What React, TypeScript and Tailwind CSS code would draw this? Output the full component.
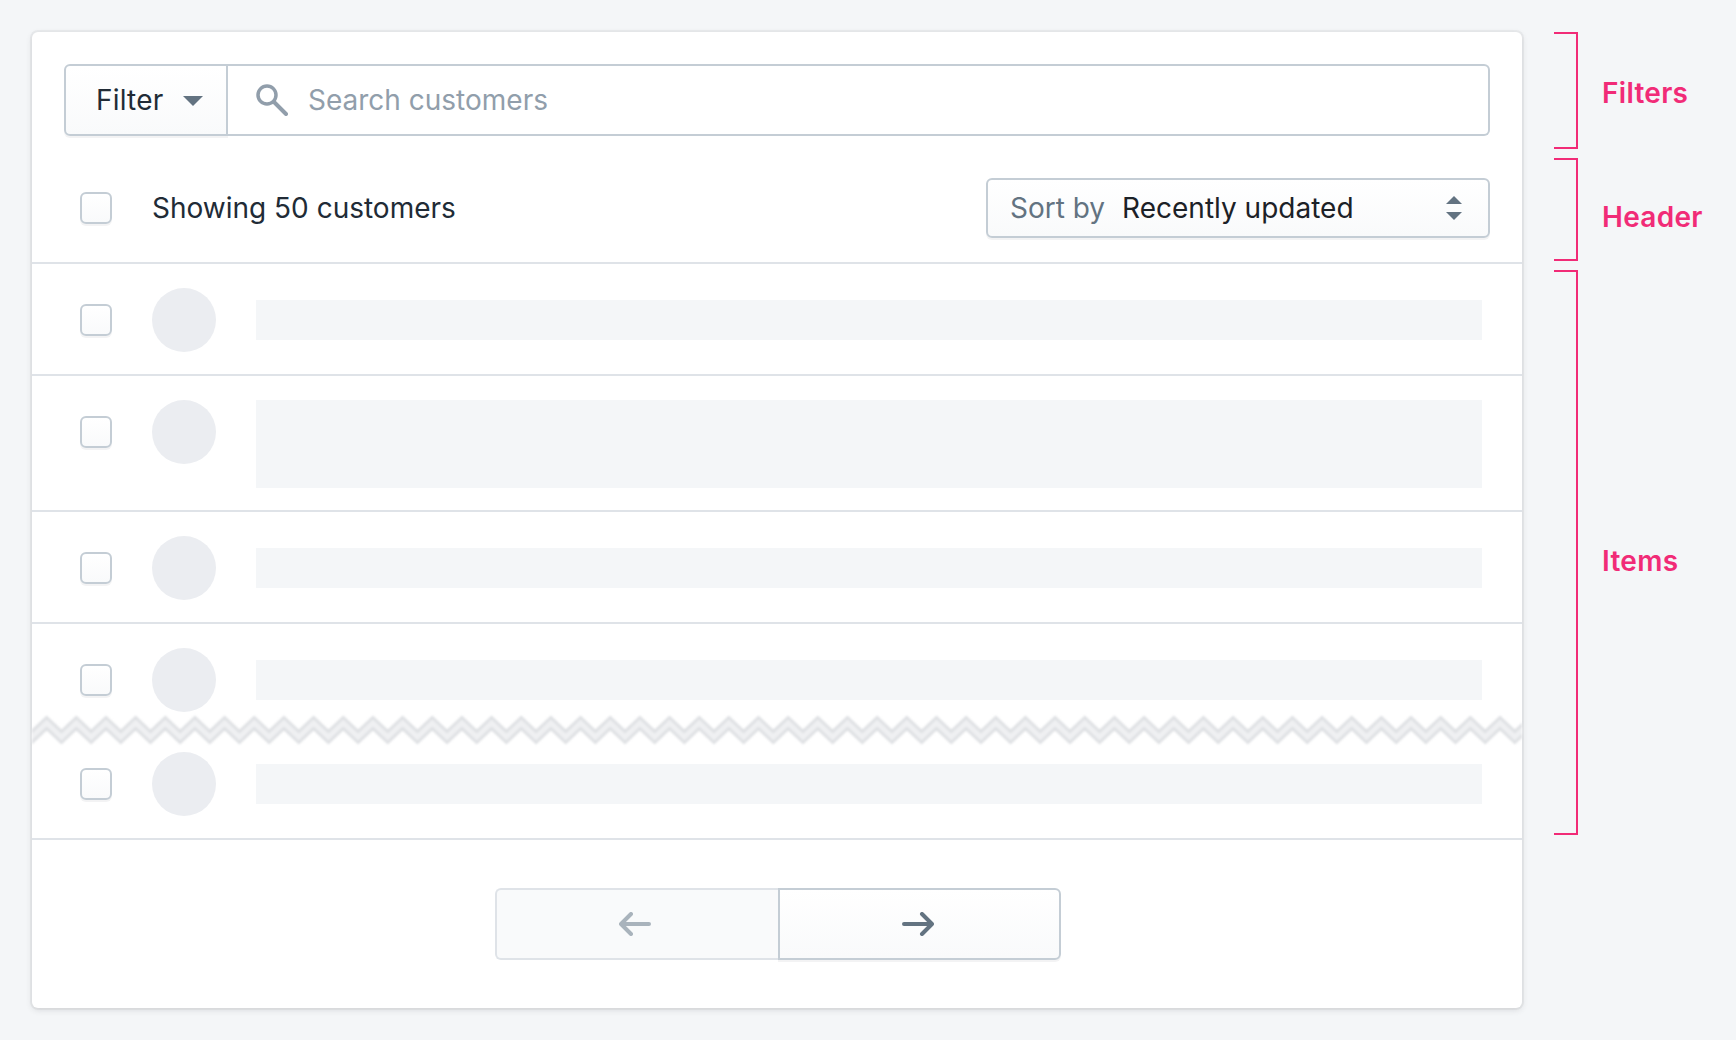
import React from 'react';

const ZIGZAG_POINTS = Array.from({ length: 104 }, (_, i) => `${-15 + i * 14.83},${i % 2 === 0 ? 11 : 25}`).join(' ');

const Checkbox: React.FC = () => (
  <div className="w-8 h-8 shrink-0 rounded-md border-2 border-[#c4cdd5] bg-gradient-to-b from-white to-[#f9fafb] shadow-[0_2px_0_rgba(22,29,37,0.05)]"></div>
);

const Row: React.FC<{ barClass?: string; bottom?: boolean }> = ({ barClass = 'h-10 mt-3', bottom = true }) => (
  <div className={`flex pl-12 pr-10 pt-6 ${bottom ? 'pb-[22px] border-b-2 border-[#dfe3e8]' : ''}`}>
    <div className="mt-4">
      <Checkbox />
    </div>
    <div className="w-16 h-16 ml-10 shrink-0 rounded-full bg-[#ebedf1]"></div>
    <div className={`flex-1 ml-10 bg-[#f4f6f8] ${barClass}`}></div>
  </div>
);

const Bracket: React.FC<{ label: string; heightClass: string; labelClass: string }> = ({ label, heightClass, labelClass }) => (
  <div className={`flex items-center ${heightClass}`}>
    <div className="w-6 h-full border-y-2 border-r-2 border-[#f12b77]"></div>
    <span className={`ml-6 text-[28px] font-semibold tracking-[0.3px] text-[#f12b77] ${labelClass}`}>{label}</span>
  </div>
);

const App: React.FC = () => {
  return (
    <div className="flex h-[1040px] overflow-hidden bg-[#f4f6f8] pt-8 pl-8 font-['Inter',sans-serif]">
      <div className="w-[1490px] h-[976px] shrink-0 rounded-md bg-white shadow-[0_0_0_2px_rgba(63,63,68,0.05),0_2px_6px_rgba(63,63,68,0.15)]">
        <div className="px-8 pt-8">
          <div className="flex h-[72px]">
            <button className="flex w-[164px] items-center rounded-l-md border-2 border-[#c4cdd5] bg-gradient-to-b from-white to-[#f9fafb] pl-[30px] text-[28px] tracking-[0.2px] text-[#212b36] shadow-[0_2px_0_rgba(22,29,37,0.05)]">
              Filter
              <svg className="ml-[20px] mt-[2px]" width="20" height="10" viewBox="0 0 20 10">
                <path d="M0 0h20L10 10z" fill="#637381" />
              </svg>
            </button>
            <div className="flex flex-1 items-center rounded-r-md border-y-2 border-r-2 border-[#c4cdd5] pl-[28px]">
              <svg width="32" height="32" viewBox="0 0 32 32" fill="none" stroke="#919eab">
                <circle cx="11" cy="11" r="9" strokeWidth="3.5" />
                <path d="M18 18l12 12" strokeWidth="4" strokeLinecap="round" />
              </svg>
              <input
                className="ml-5 flex-1 bg-transparent text-[28px] text-[#212b36] outline-none placeholder:text-[#919eab]"
                placeholder="Search customers"
                readOnly
              />
            </div>
          </div>
        </div>

        <div className="flex items-center border-b-2 border-[#dfe3e8] pt-[42px] pb-6 pl-12 pr-8">
          <Checkbox />
          <span className="ml-10 flex-1 text-[28px] text-[#212b36]">Showing 50 customers</span>
          <div className="flex h-[60px] w-[504px] items-center rounded-md border-2 border-[#c4cdd5] bg-gradient-to-b from-white to-[#f9fafb] pl-[22px] pr-[26px] text-[28px] shadow-[0_2px_0_rgba(22,29,37,0.05)]">
            <span className="text-[#637381]">Sort by</span>
            <span className="ml-[17px] flex-1 text-[#1c2127]">Recently updated</span>
            <svg width="16" height="24" viewBox="0 0 16 24" fill="#637381">
              <path d="M0 8L8 0l8 8zM0 16h16l-8 8z" />
            </svg>
          </div>
        </div>

        <Row />
        <Row barClass="h-[88px]" />
        <Row />
        <Row bottom={false} />
        <div className="h-10">
          <svg className="block blur-[1px]" width="1490" height="40" viewBox="0 0 1490 40" fill="none" strokeLinejoin="miter">
            <polyline points={ZIGZAG_POINTS} stroke="#dfe1e4" strokeWidth="11" />
            <polyline points={ZIGZAG_POINTS} stroke="#eff0f2" strokeWidth="5" />
          </svg>
        </div>
        <div className="flex border-b-2 border-[#dfe3e8] pl-12 pr-10 pb-[22px]">
          <div className="mt-4">
            <Checkbox />
          </div>
          <div className="w-16 h-16 ml-10 shrink-0 rounded-full bg-[#ebedf1]"></div>
          <div className="mt-3 h-10 flex-1 ml-10 bg-[#f4f6f8]"></div>
        </div>

        <div className="flex justify-center pt-12 pl-[2px]">
          <button className="flex h-[72px] w-[283px] items-center justify-center rounded-l-md border-y-2 border-l-2 border-[#dfe3e8] bg-[#f9fafb] pr-[5px]">
            <svg width="32" height="24" viewBox="0 0 32 24" fill="none" stroke="#a9b3bc" strokeWidth="4" strokeLinecap="round" strokeLinejoin="round">
              <path d="M30 12H3M12 2L2 12l10 10" />
            </svg>
          </button>
          <button className="flex h-[72px] w-[283px] items-center justify-center rounded-r-md border-2 border-[#c4cdd5] bg-gradient-to-b from-white to-[#f9fafb] pr-[3px] shadow-[0_2px_0_rgba(22,29,37,0.05)]">
            <svg width="32" height="24" viewBox="0 0 32 24" fill="none" stroke="#637381" strokeWidth="4" strokeLinecap="round" strokeLinejoin="round">
              <path d="M2 12h27M20 2l10 10-10 10" />
            </svg>
          </button>
        </div>
      </div>

      <div className="ml-8 flex flex-col gap-[9px]">
        <Bracket label="Filters" heightClass="h-[117px]" labelClass="pt-1" />
        <Bracket label="Header" heightClass="h-[103px]" labelClass="pt-[14px]" />
        <Bracket label="Items" heightClass="h-[565px]" labelClass="pt-4" />
      </div>
    </div>
  );
};

export default App;
